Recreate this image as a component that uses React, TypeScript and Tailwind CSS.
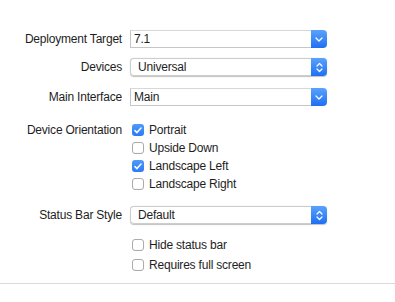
import React from "react";

const font = { fontFamily: '"Liberation Sans", Arial, sans-serif' };

function ChevronDown() {
  return (
    <svg width="8" height="5" viewBox="0 0 8 5" fill="none">
      <path d="M1 1l3 3 3-3" stroke="white" strokeWidth="1.3" strokeLinecap="round" strokeLinejoin="round" />
    </svg>
  );
}

function ChevronUpDown() {
  return (
    <svg width="7" height="11" viewBox="0 0 7 11" fill="none">
      <path d="M1 4l2.5-2.5L6 4M1 7l2.5 2.5L6 7" stroke="white" strokeWidth="1.2" strokeLinecap="round" strokeLinejoin="round" />
    </svg>
  );
}

function ComboBox({ value }: { value: string }) {
  return (
    <div className="flex h-[18px] w-[197px]">
      <div className="flex flex-1 items-center border border-r-0 border-[#c6c6c6] border-t-[#d8d8d8] bg-white pl-[3px] text-[12px] text-[#1e1e1e]">
        {value}
      </div>
      <div className="flex w-[16px] items-center justify-center rounded-r-[4px] bg-gradient-to-b from-[#5aa2fb] to-[#1d6ff4]">
        <ChevronDown />
      </div>
    </div>
  );
}

function PopUp({ value }: { value: string }) {
  return (
    <div className="flex h-[18px] w-[197px] rounded-[4px] shadow-[0_0.5px_1px_rgba(0,0,0,0.25)]">
      <div className="flex flex-1 items-center rounded-l-[4px] border border-r-0 border-[#cdcdcd] bg-white pl-[7px] text-[12px] text-[#1e1e1e]">
        {value}
      </div>
      <div className="flex w-[16px] items-center justify-center rounded-r-[4px] bg-gradient-to-b from-[#5aa2fb] to-[#1d6ff4]">
        <ChevronUpDown />
      </div>
    </div>
  );
}

function Check({ label, checked }: { label: string; checked?: boolean }) {
  return (
    <div className="flex h-[18px] items-center gap-[5px] pl-[2px] text-[12px] text-[#1e1e1e]">
      {checked ? (
        <span className="flex h-[12px] w-[12px] items-center justify-center rounded-[3px] bg-gradient-to-b from-[#4f9bfa] to-[#2a7af5]">
          <svg width="8" height="7" viewBox="0 0 8 7" fill="none">
            <path d="M1 3.6l2 2L7 1" stroke="white" strokeWidth="1.5" strokeLinecap="round" strokeLinejoin="round" />
          </svg>
        </span>
      ) : (
        <span className="h-[12px] w-[12px] rounded-[3px] border border-[#ababab] bg-white shadow-[inset_0_-0.5px_0_rgba(0,0,0,0.05)]" />
      )}
      <span>{label}</span>
    </div>
  );
}

function Row({ label, children, className = "" }: { label?: string; children: React.ReactNode; className?: string }) {
  return (
    <div className={`grid grid-cols-[122px_1fr] gap-x-[8px] ${className}`}>
      <div className="flex h-[18px] items-center justify-end text-[12px] text-[#1e1e1e]">{label}</div>
      <div>{children}</div>
    </div>
  );
}

export default function App() {
  return (
    <div className="h-[302px] w-[395px] bg-white tracking-[-0.2px]" style={font}>
      <div className="flex flex-col pt-[30px]">
        <Row label="Deployment Target">
          <ComboBox value="7.1" />
        </Row>
        <Row label="Devices" className="mt-[10px]">
          <PopUp value="Universal" />
        </Row>
        <Row label="Main Interface" className="mt-[12px]">
          <ComboBox value="Main" />
        </Row>
        <Row label="Device Orientation" className="mt-[15px]">
          <Check label="Portrait" checked />
          <Check label="Upside Down" />
          <Check label="Landscape Left" checked />
          <Check label="Landscape Right" />
        </Row>
        <Row label="Status Bar Style" className="mt-[13px]">
          <PopUp value="Default" />
        </Row>
        <Row className="mt-[11px]">
          <div className="flex flex-col">
            <div className="flex h-[20px] items-center">
              <Check label="Hide status bar" />
            </div>
            <div className="flex h-[20px] items-center">
              <Check label="Requires full screen" />
            </div>
          </div>
        </Row>
        <div className="mt-[8px] h-px w-full bg-[#dadada]" />
      </div>
    </div>
  );
}
